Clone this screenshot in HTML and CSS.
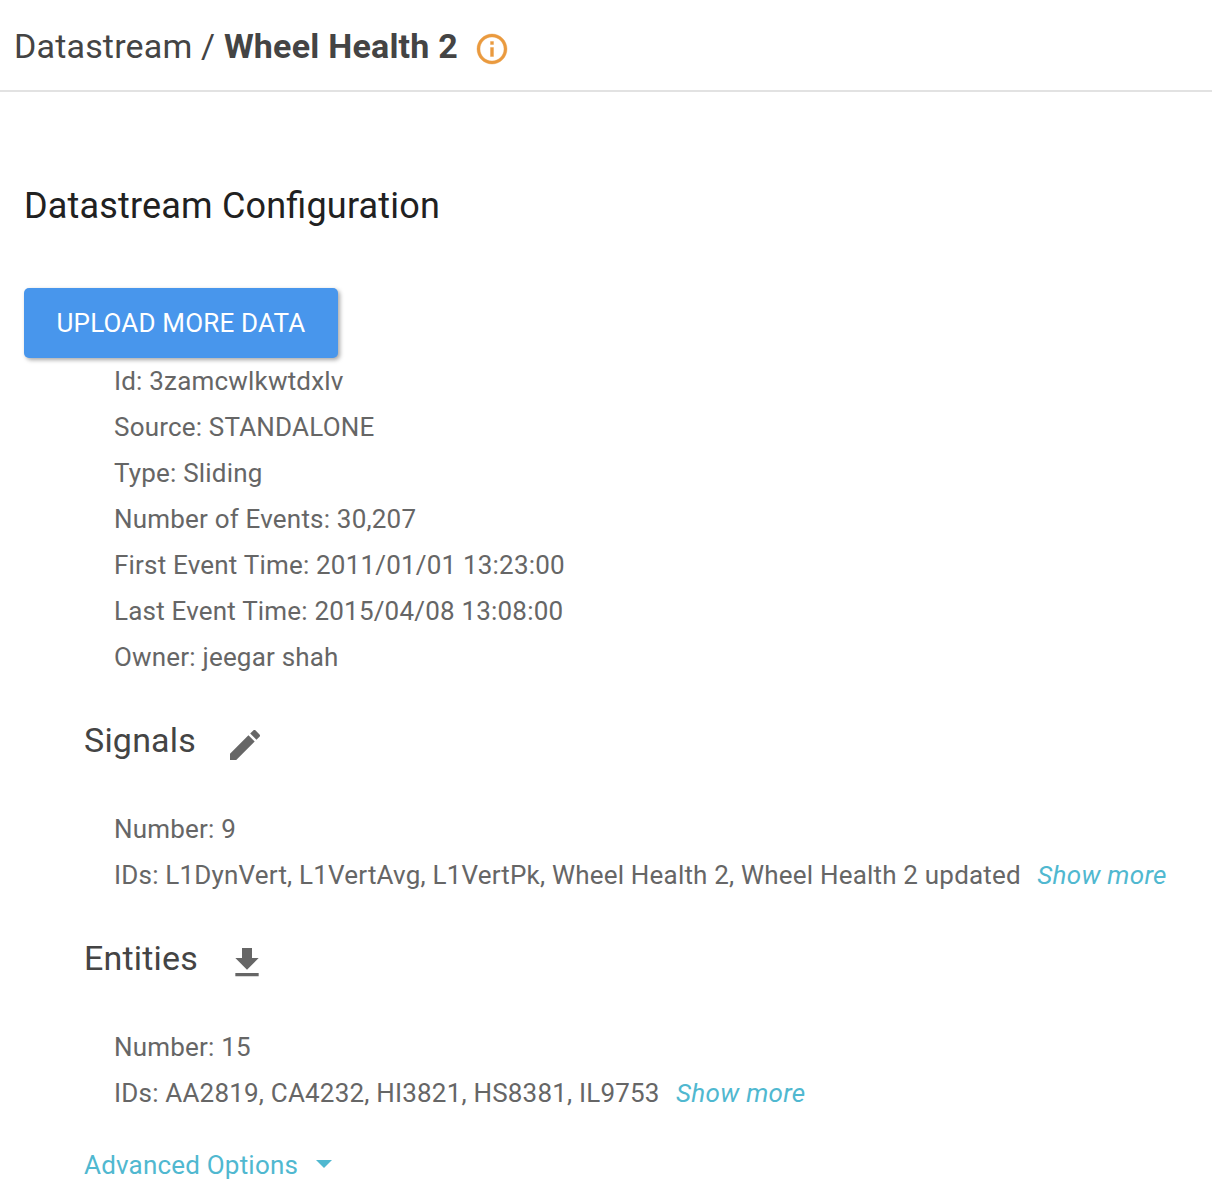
FILE: index.html
```html
<!DOCTYPE html>
<html lang="en">
<head>
<meta charset="utf-8">
<title>Datastream</title>
<link rel="stylesheet" href="styles.css">
</head>
<body>
<header class="topbar">
  <h1 class="crumbs"><span class="crumb-root">Datastream / </span><b class="crumb-name">Wheel Health 2</b></h1>
  <svg class="info" viewBox="0 0 24 24"><path d="M11 17h2v-6h-2v6zm1-15C6.48 2 2 6.48 2 12s4.480 10 10 10 10-4.480 10-10S17.520 2 12 2zm0 18c-4.410 0-8-3.590-8-8s3.590-8 8-8 8 3.590 8 8-3.590 8-8 8zM11 9h2V7h-2v2z"/></svg>
</header>
<main class="content">
  <h2 class="title">Datastream Configuration</h2>
  <button class="upload"><span>UPLOAD MORE DATA</span></button>
  <ul class="details">
    <li>Id: 3zamcwlkwtdxlv</li>
    <li>Source: STANDALONE</li>
    <li>Type: Sliding</li>
    <li>Number of Events: 30,207</li>
    <li>First Event Time: 2011/01/01 13:23:00</li>
    <li>Last Event Time: 2015/04/08 13:08:00</li>
    <li>Owner: jeegar shah</li>
  </ul>
  <section class="group">
    <div class="group-head"><h3>Signals</h3>
      <svg class="action" viewBox="0 0 24 24"><path d="M3 17.250V21h3.750L17.810 9.940l-3.750-3.750L3 17.250zM20.710 7.040c.390-.390.390-1.020 0-1.410l-2.340-2.340c-.390-.390-1.020-.390-1.410 0l-1.830 1.830 3.750 3.750 1.830-1.830z"/></svg>
    </div>
    <ul class="details">
      <li>Number: 9</li>
      <li><span>IDs: L1DynVert, L1VertAvg, L1VertPk, Wheel Health 2, Wheel Health 2 updated</span><a class="more">Show more</a></li>
    </ul>
  </section>
  <section class="group">
    <div class="group-head"><h3>Entities</h3>
      <svg class="action" viewBox="0 0 24 24"><path d="M19 9h-4V3H9v6H5l7 7 7-7zM5 18v2h14v-2H5z"/></svg>
    </div>
    <ul class="details">
      <li>Number: 15</li>
      <li><span>IDs: AA2819, CA4232, HI3821, HS8381, IL9753</span><a class="more">Show more</a></li>
    </ul>
  </section>
  <div class="advanced"><span>Advanced Options</span><i class="caret"></i></div>
</main>
</body>
</html>
```
FILE: styles.css
```css
* { box-sizing: border-box; }
body { margin: 0; background: #fff; color: #666; font: 400 26px/46px Roboto, sans-serif; letter-spacing: .195px; overflow: hidden; }
h1, h2, h3, ul { margin: 0; padding: 0; font-weight: 400; list-style: none; }
svg { fill: #666; flex: none; }
.topbar { height: 92px; border-bottom: 2px solid #e2e2e2; padding: 0 14px; display: flex; align-items: center; color: #444; white-space: pre; }
.crumbs { font-size: 34px; line-height: 40px; letter-spacing: .18px; padding-top: 2px; }
.crumb-name { font-weight: 700; letter-spacing: .22px; }
.info { width: 36px; height: 36px; fill: #ea9a3e; stroke: #ea9a3e; stroke-width: .25; margin: 7px 0 0 16px; }
.content { padding: 92px 24px 0; }
.title { font-size: 36px; line-height: 44px; letter-spacing: .18px; font-feature-settings: "liga" 1; color: #212121; }
.upload { display: flex; align-items: center; justify-content: center; width: 314px; height: 70px; margin-top: 60px; padding: 0; border: 0; border-radius: 5px; background: #4896ec; color: #fff; font: 400 26px/46px Roboto, sans-serif; letter-spacing: .18px; box-shadow: 2px 2px 4px rgba(0,0,0,.35); }
.details { padding-left: 90px; }
.details li { height: 46px; white-space: nowrap; }
.group { padding-top: 38px; }
.group-head { display: flex; align-items: center; height: 46px; margin: 0 0 42px 60px; color: #444; }
.group-head h3 { font-size: 34px; line-height: 44px; letter-spacing: .2px; padding-bottom: 2px; }
.action { width: 40px; height: 40px; margin: 7px 0 0 28.5px; }
.more { color: #50b8d0; font-style: italic; letter-spacing: .3px; margin-left: 16.4px; }
.advanced { display: flex; align-items: center; padding-left: 60px; margin-top: 26px; color: #50b8d0; }
.caret { border: 8px solid transparent; border-top-color: #50b8d0; border-bottom: 0; margin: 0 0 2px 18px; }
```
